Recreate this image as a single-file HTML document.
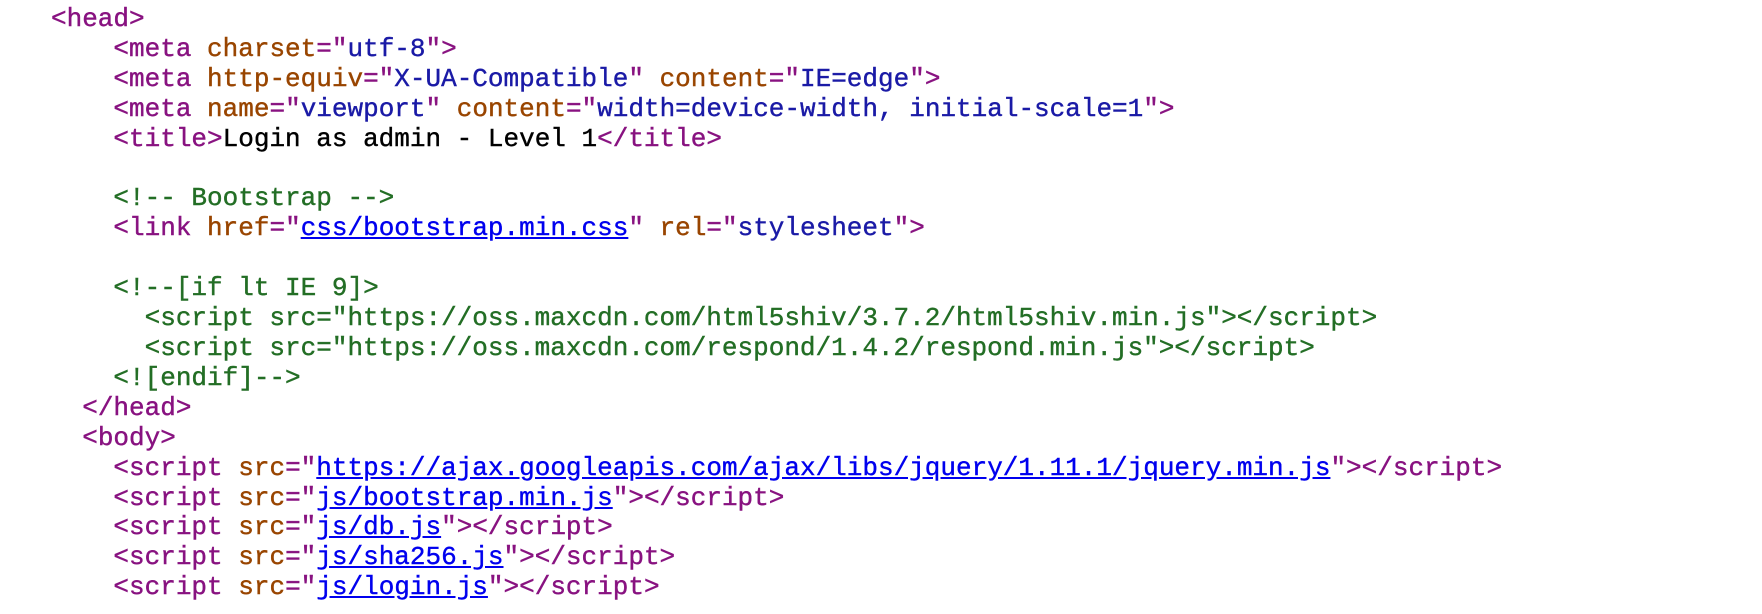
<!DOCTYPE html>
<html><head><meta charset="utf-8"><style>
html,body{margin:0;padding:0;background:#fff;width:1762px;height:614px;overflow:hidden}
pre{margin:0;position:absolute;left:51px;top:5px;font-family:"Liberation Mono",monospace;font-size:26px;line-height:29.9px;color:#000;white-space:pre;-webkit-text-stroke:0.4px}
.t{color:#881280}.a{color:#994500}.v{color:#1a1aa6}.c{color:#236e25}
a{color:#0000ee;text-decoration:underline}
</style></head><body><pre><span class="t">&lt;head&gt;</span>
    <span class="t">&lt;meta </span><span class="a">charset</span><span class="t">="</span><span class="v">utf-8</span><span class="t">"&gt;</span>
    <span class="t">&lt;meta </span><span class="a">http-equiv</span><span class="t">="</span><span class="v">X-UA-Compatible</span><span class="t">" </span><span class="a">content</span><span class="t">="</span><span class="v">IE=edge</span><span class="t">"&gt;</span>
    <span class="t">&lt;meta </span><span class="a">name</span><span class="t">="</span><span class="v">viewport</span><span class="t">" </span><span class="a">content</span><span class="t">="</span><span class="v">width=device-width, initial-scale=1</span><span class="t">"&gt;</span>
    <span class="t">&lt;title&gt;</span>Login as admin - Level 1<span class="t">&lt;/title&gt;</span>

    <span class="c">&lt;!-- Bootstrap --&gt;</span>
    <span class="t">&lt;link </span><span class="a">href</span><span class="t">="</span><a>css/bootstrap.min.css</a><span class="t">" </span><span class="a">rel</span><span class="t">="</span><span class="v">stylesheet</span><span class="t">"&gt;</span>

    <span class="c">&lt;!--[if lt IE 9]&gt;
      &lt;script src="https://oss.maxcdn.com/html5shiv/3.7.2/html5shiv.min.js"&gt;&lt;/script&gt;
      &lt;script src="https://oss.maxcdn.com/respond/1.4.2/respond.min.js"&gt;&lt;/script&gt;
    &lt;![endif]--&gt;</span>
  <span class="t">&lt;/head&gt;</span>
  <span class="t">&lt;body&gt;</span>
    <span class="t">&lt;script </span><span class="a">src</span><span class="t">="</span><a>https://ajax.googleapis.com/ajax/libs/jquery/1.11.1/jquery.min.js</a><span class="t">"&gt;&lt;/script&gt;</span>
    <span class="t">&lt;script </span><span class="a">src</span><span class="t">="</span><a>js/bootstrap.min.js</a><span class="t">"&gt;&lt;/script&gt;</span>
    <span class="t">&lt;script </span><span class="a">src</span><span class="t">="</span><a>js/db.js</a><span class="t">"&gt;&lt;/script&gt;</span>
    <span class="t">&lt;script </span><span class="a">src</span><span class="t">="</span><a>js/sha256.js</a><span class="t">"&gt;&lt;/script&gt;</span>
    <span class="t">&lt;script </span><span class="a">src</span><span class="t">="</span><a>js/login.js</a><span class="t">"&gt;&lt;/script&gt;</span></pre></body></html>
